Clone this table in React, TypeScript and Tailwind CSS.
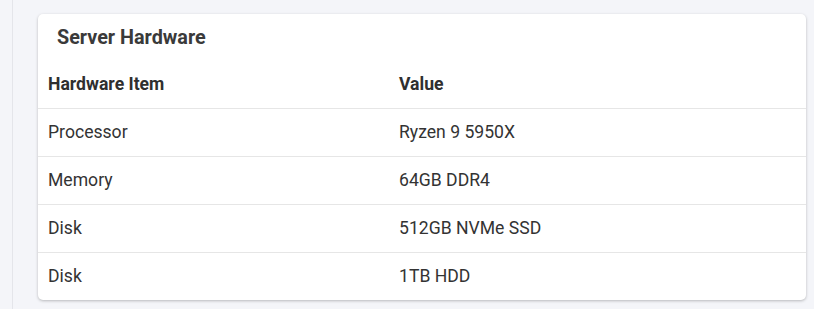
const rows = [
  { item: "Processor", value: "Ryzen 9 5950X" },
  { item: "Memory", value: "64GB DDR4" },
  { item: "Disk", value: "512GB NVMe SSD" },
  { item: "Disk", value: "1TB HDD" },
];

export default function App() {
  return (
    <div className="h-[309px] w-[814px] bg-[#f4f5f9] pl-3 font-['Roboto',sans-serif]">
      <div className="h-full border-l border-[#e4e5ea] pl-[25px] pt-[14px] pr-2">
        <div className="w-[768px] overflow-hidden rounded-[5px] bg-white shadow-[0_1px_3px_rgba(0,0,0,0.25)]">
          <h2 className="h-[46px] pl-[19px] pt-[10px] text-[19.8px] font-bold leading-[28px] text-[#3a3a3a]">
            Server Hardware
          </h2>
          <table className="w-full border-collapse text-left text-[17.6px] text-[#333]">
            <thead>
              <tr className="h-[48px] border-b border-[#e6e6e6]">
                <th className="w-[351px] px-[10px] font-bold text-[#2f2f2f]">Hardware Item</th>
                <th className="px-[10px] font-bold text-[#2f2f2f]">Value</th>
              </tr>
            </thead>
            <tbody>
              {rows.map((r, i) => (
                <tr
                  key={i}
                  className={`h-[48px] ${i < rows.length - 1 ? "border-b border-[#e6e6e6]" : ""}`}
                >
                  <td className="px-[10px] font-normal">{r.item}</td>
                  <td className="px-[10px] font-normal">{r.value}</td>
                </tr>
              ))}
            </tbody>
          </table>
        </div>
      </div>
    </div>
  );
}
